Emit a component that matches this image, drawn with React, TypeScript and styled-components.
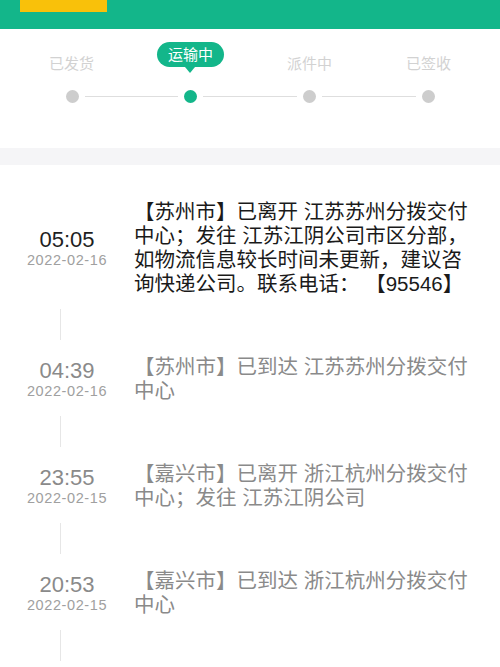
import * as React from "react";
import styled, { createGlobalStyle } from "styled-components";

const GlobalStyle = createGlobalStyle`
  html, body {
    margin: 0;
    padding: 0;
    background: #fff;
  }
  body {
    font-family: "Liberation Sans", "Noto Sans CJK SC", sans-serif;
    overflow: hidden;
  }
`;

const GREEN = "#13b68a";

const Page = styled.div`
  width: 500px;
  height: 667px;
  overflow: hidden;
  background: #fff;
`;

const Header = styled.div`
  height: 29px;
  background: ${GREEN};
  padding-left: 20px;
`;

const Badge = styled.div`
  width: 87px;
  height: 12px;
  background: #f9c10a;
`;

const Steps = styled.div`
  padding: 13px 12px 45px;
`;

const LabelRow = styled.div`
  display: grid;
  grid-template-columns: repeat(4, 1fr);
  height: 31px;
`;

const LabelCell = styled.div`
  display: flex;
  justify-content: center;
`;

const Label = styled.span`
  padding-top: 12px;
  font-size: 15px;
  line-height: 20px;
  color: #d2d2d2;
`;

const Bubble = styled.span`
  position: relative;
  height: 25px;
  padding: 0 11px;
  border-radius: 13px;
  background: ${GREEN};
  color: #fff;
  font-size: 15px;
  line-height: 25px;

  &::after {
    content: "";
    position: absolute;
    left: 50%;
    bottom: -6px;
    margin-left: -5px;
    border-left: 5px solid transparent;
    border-right: 5px solid transparent;
    border-top: 6px solid ${GREEN};
  }
`;

const Track = styled.div`
  display: flex;
  align-items: center;
  margin: 17px 53.5px 0;
`;

const Dot = styled.span<{ $active?: boolean }>`
  width: 13px;
  height: 13px;
  border-radius: 50%;
  flex: none;
  background: ${(p) => (p.$active ? GREEN : "#cdcdcd")};
`;

const TrackLine = styled.span`
  flex: 1;
  height: 1.5px;
  margin: 0 6px;
  background: #dedede;
`;

const Band = styled.div`
  height: 17px;
  background: #f5f5f7;
`;

const Timeline = styled.div`
  padding-top: 35px;
`;

const Entry = styled.div`
  display: flex;
  align-items: center;
`;

const TimeCol = styled.div`
  width: 134px;
  flex: none;
  display: flex;
  flex-direction: column;
  align-items: center;
`;

const Time = styled.span<{ $current?: boolean }>`
  font-size: 22px;
  line-height: 25px;
  color: ${(p) => (p.$current ? "#1f1f1f" : "#8a8a8a")};
`;

const DateText = styled.span`
  font-size: 14.5px;
  line-height: 17px;
  letter-spacing: 0.6px;
  color: #a0a0a0;
`;

const Desc = styled.div<{ $current?: boolean }>`
  width: 340px;
  font-size: 20.5px;
  line-height: 24px;
  color: ${(p) => (p.$current ? "#1a1a1a" : "#8a8a8a")};
`;

const Connector = styled.div`
  width: 1px;
  height: 31px;
  margin: 13px 0 15px 60px;
  background: #e6e6e6;
`;

const steps = ["已发货", "运输中", "派件中", "已签收"];
const activeStep = 1;

const events = [
  {
    time: "05:05",
    date: "2022-02-16",
    text: "【苏州市】已离开 江苏苏州分拨交付中心；发往 江苏江阴公司市区分部，如物流信息较长时间未更新，建议咨询快递公司。联系电话： 【95546】",
  },
  {
    time: "04:39",
    date: "2022-02-16",
    text: "【苏州市】已到达 江苏苏州分拨交付中心",
  },
  {
    time: "23:55",
    date: "2022-02-15",
    text: "【嘉兴市】已离开 浙江杭州分拨交付中心；发往 江苏江阴公司",
  },
  {
    time: "20:53",
    date: "2022-02-15",
    text: "【嘉兴市】已到达 浙江杭州分拨交付中心",
  },
];

const App = () => {
  return (
    <Page>
      <GlobalStyle />
      <Header>
        <Badge />
      </Header>
      <Steps>
        <LabelRow>
          {steps.map((s, i) => (
            <LabelCell key={s}>
              {i === activeStep ? <Bubble>{s}</Bubble> : <Label>{s}</Label>}
            </LabelCell>
          ))}
        </LabelRow>
        <Track>
          {steps.map((s, i) => (
            <React.Fragment key={s}>
              {i > 0 && <TrackLine />}
              <Dot $active={i === activeStep} />
            </React.Fragment>
          ))}
        </Track>
      </Steps>
      <Band />
      <Timeline>
        {events.map((e, i) => (
          <React.Fragment key={e.time}>
            <Entry>
              <TimeCol>
                <Time $current={i === 0}>{e.time}</Time>
                <DateText>{e.date}</DateText>
              </TimeCol>
              <Desc $current={i === 0}>{e.text}</Desc>
            </Entry>
            <Connector />
          </React.Fragment>
        ))}
      </Timeline>
    </Page>
  );
};

export default App;
